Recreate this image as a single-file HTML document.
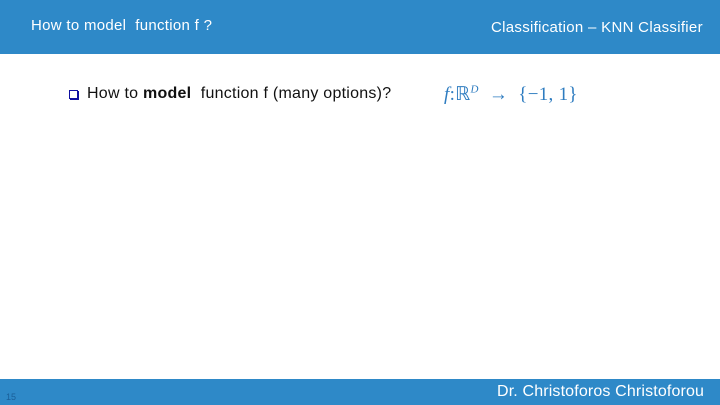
<!DOCTYPE html>
<html><head><style>
body{margin:0;width:720px;height:405px;position:relative;background:#fff;font-family:"Liberation Sans",sans-serif;overflow:hidden}
.hdr{position:absolute;left:0;top:0;width:720px;height:54px;background:#2E89C8}
.ftr{position:absolute;left:0;top:379px;width:720px;height:26px;background:#2E89C8}
.t{position:absolute;color:#fff;white-space:nowrap}
</style></head><body>
<div class="hdr"></div>
<div class="t" style="left:31px;top:17px;font-size:15px;letter-spacing:0.3px">How to model&nbsp; function f ?</div>
<div class="t" style="left:491px;top:19px;font-size:15px;letter-spacing:0.3px">Classification – KNN Classifier</div>
<div style="position:absolute;left:69px;top:90px;width:7px;height:7px;border:1px solid #1010a0;box-shadow:1px 1px 0 #1010a0"></div>
<div style="position:absolute;left:87px;top:85px;font-size:16px;letter-spacing:0.25px;white-space:nowrap;color:#111">How to <b>model</b>&nbsp; function f (many options)?</div>
<div style="position:absolute;left:444px;top:83px;font-family:'Liberation Serif',serif;font-size:19px;letter-spacing:0.3px;color:#2E7CC0;white-space:nowrap"><i>f</i>:ℝ<sup style="font-size:11px"><i>D</i></sup>&nbsp; →&nbsp; {−1, 1}</div>
<div class="ftr"></div>
<div style="position:absolute;left:6px;top:392px;font-size:9px;color:#1a5f99">15</div>
<div class="t" style="left:497px;top:383px;font-size:16px;letter-spacing:0.15px">Dr. Christoforos Christoforou</div>
</body></html>
